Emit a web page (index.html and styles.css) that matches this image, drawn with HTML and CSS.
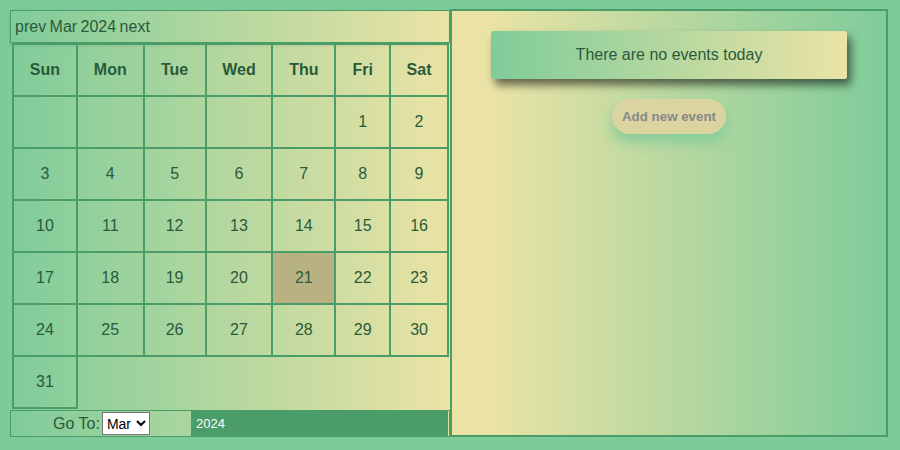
FILE: index.html
```html
<!DOCTYPE html>
<html>
<head>
<meta charset="utf-8">
<link rel="stylesheet" href="styles.css">
</head>
<body>
<div class="app">
  <div class="calendar">
    <div class="cal-head">prev Mar 2024 next</div>
    <table class="grid">
      <tr class="days">
        <th class="c1">Sun</th><th class="c2">Mon</th><th class="c3">Tue</th><th class="c4">Wed</th><th class="c5">Thu</th><th class="c6">Fri</th><th class="c7">Sat</th>
      </tr>
      <tr><td></td><td></td><td></td><td></td><td></td><td>1</td><td>2</td></tr>
      <tr><td>3</td><td>4</td><td>5</td><td>6</td><td>7</td><td>8</td><td>9</td></tr>
      <tr><td>10</td><td>11</td><td>12</td><td>13</td><td>14</td><td>15</td><td>16</td></tr>
      <tr><td>17</td><td>18</td><td>19</td><td>20</td><td class="today">21</td><td>22</td><td>23</td></tr>
      <tr><td>24</td><td>25</td><td>26</td><td>27</td><td>28</td><td>29</td><td>30</td></tr>
      <tr><td>31</td></tr>
    </table>
    <div class="goto">
      <div class="goto-month">Go To: <select class="month-select"><option>Mar</option></select></div>
      <input class="goto-year" type="text" value="2024">
    </div>
  </div>
  <div class="events">
    <div class="no-events">There are no events today</div>
    <button class="add">Add new event</button>
  </div>
</div>
</body>
</html>
```

FILE: styles.css
```css
html, body {
  margin: 0;
  padding: 0;
  background: #7ecb9a;
}
body {
  font-family: "Liberation Sans", Arial, sans-serif;
  color: #2b5a3a;
}
.app {
  display: flex;
  align-items: flex-start;
  padding: 10px 0 0 10px;
}
.calendar {
  width: 440px;
  height: 427px;
  background: linear-gradient(to right, #7fcc9a, #ebe3a5);
  display: flex;
  flex-direction: column;
}
.cal-head {
  box-sizing: border-box;
  height: 33px;
  border: 1px solid #4a9c68;
  padding: 5px 4px;
  font-size: 16px;
  line-height: 21px;
  word-spacing: -1px;
  box-shadow: 0 2px 4px rgba(0, 0, 0, 0.12);
}
.grid {
  border-collapse: collapse;
  margin-left: 2px;
  width: 437px;
}
.grid th, .grid td {
  border: 2px solid #4a9c68;
  padding: 0;
  height: 50px;
  text-align: center;
  font-size: 16px;
}
.grid th { font-weight: bold; }
.c1 { width: 62px; }
.c2 { width: 65px; }
.c3 { width: 60px; }
.c4 { width: 65px; }
.c5 { width: 61px; }
.c6 { width: 53px; }
.c7 { width: 56px; }
.grid td.today { background: #b8b283; }
.goto {
  box-sizing: border-box;
  margin-top: 1px;
  height: 27px;
  border: 1px solid #4a9c68;
  display: flex;
}
.goto-month {
  width: 180px;
  box-sizing: border-box;
  padding-left: 1px;
  display: flex;
  align-items: center;
  justify-content: center;
  gap: 2px;
  font-size: 16px;
}
.month-select {
  font-family: "Liberation Sans", Arial, sans-serif;
  font-size: 14px;
  height: 23px;
  width: 48px;
  background: #fff;
  border: 1px solid #767676;
  border-radius: 0;
  color: #000;
}
.goto-year {
  flex: 1;
  min-width: 0;
  box-sizing: border-box;
  height: 25px;
  border: none;
  margin: 0 1px 0 0;
  background: #4a9c68;
  color: #fff;
  font-family: "Liberation Sans", Arial, sans-serif;
  font-size: 13px;
  padding: 0 5px;
  outline: none;
}
.events {
  box-sizing: border-box;
  width: 438px;
  height: 428px;
  margin-top: -1px;
  border: 2px solid #4a9c68;
  background: linear-gradient(to right, #ebe3a5 8%, #7fcc9a);
  display: flex;
  flex-direction: column;
  align-items: center;
  padding-top: 20px;
}
.no-events {
  width: 356px;
  height: 48px;
  border-radius: 3px;
  background: linear-gradient(to right, #7fcc9a, #ebe3a5);
  box-shadow: 4px 6px 8px rgba(0, 0, 0, 0.55);
  display: flex;
  align-items: center;
  justify-content: center;
  font-size: 16px;
  color: #2b5a3a;
}
.add {
  margin-top: 20px;
  height: 35px;
  width: 114px;
  border: none;
  border-radius: 18px;
  background: #dbd4a0;
  color: #888;
  font-family: "Liberation Sans", Arial, sans-serif;
  font-weight: bold;
  font-size: 13.33px;
  padding: 0;
  box-shadow: 0 8px 14px rgba(126, 203, 154, 0.9);
}
```
